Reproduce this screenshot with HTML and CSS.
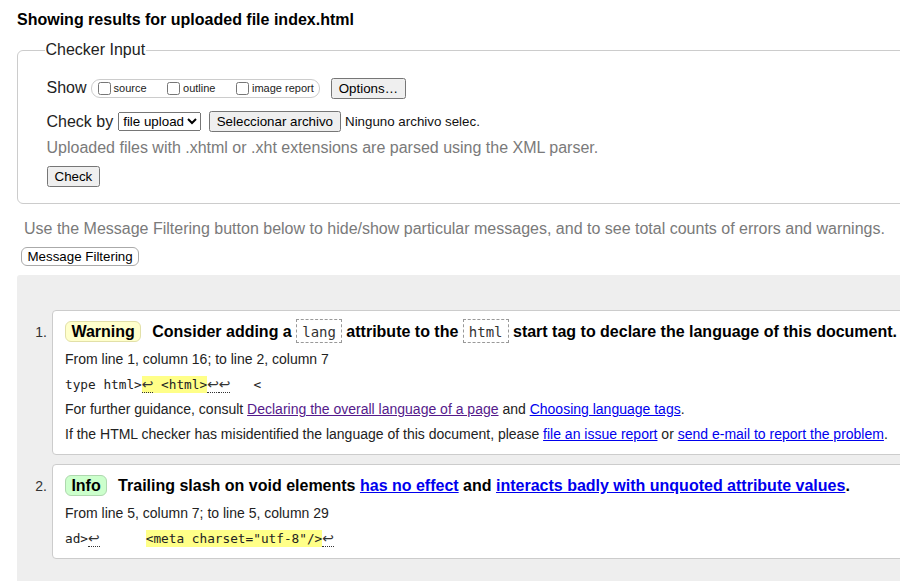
FILE: index.html
```html
<!DOCTYPE html>
<html lang="en">
<head>
<meta charset="utf-8">
<title>Showing results for uploaded file index.html - Nu Html Checker</title>
<link rel="stylesheet" href="styles.css">
</head>
<body>
<div class="page">
  <h2 class="heading">Showing results for uploaded file index.html</h2>

  <fieldset class="checker">
    <legend class="checker-legend">Checker Input</legend>
    <div class="row row-show">
      <span class="row-label">Show</span>
      <span class="show-group">
        <label class="opt"><input type="checkbox" class="cb">source</label>
        <label class="opt"><input type="checkbox" class="cb">outline</label>
        <label class="opt opt-last"><input type="checkbox" class="cb">image report</label>
      </span>
      <button class="btn btn-options" type="button">Options…</button>
    </div>
    <div class="row row-checkby">
      <span class="row-label">Check by</span>
      <select class="select"><option>file upload</option></select>
      <button class="btn btn-file" type="button">Seleccionar archivo</button>
      <span class="file-status">Ninguno archivo selec.</span>
    </div>
    <p class="note">Uploaded files with .xhtml or .xht extensions are parsed using the XML parser.</p>
    <div class="row row-submit">
      <button class="btn" type="button">Check</button>
    </div>
  </fieldset>

  <p class="filter-note">Use the Message Filtering button below to hide/show particular messages, and to see total counts of errors and warnings.</p>
  <button class="btn-filter" type="button">Message Filtering</button>

  <div class="results">
    <ol class="messages">
      <li class="msg">
        <span class="msg-num">1.</span>
        <div class="msg-box">
          <p class="msg-title"><strong class="badge badge-warning">Warning</strong>Consider adding a <code class="attr">lang</code> attribute to the <code class="attr">html</code> start tag to declare the language of this document.</p>
          <p class="msg-detail">From line 1, column 16; to line 2, column 7</p>
          <p class="msg-code"><code>type html&gt;<span class="hl"><b class="lf">↩</b> &lt;html&gt;</span><b class="lf">↩</b><b class="lf">↩</b>   &lt;</code></p>
          <p class="msg-detail">For further guidance, consult <a class="visited" href="#lang">Declaring the overall language of a page</a> and <a href="#tags">Choosing language tags</a>.</p>
          <p class="msg-detail">If the HTML checker has misidentified the language of this document, please <a href="#issue">file an issue report</a> or <a href="#mail">send e-mail to report the problem</a>.</p>
        </div>
      </li>
      <li class="msg">
        <span class="msg-num">2.</span>
        <div class="msg-box">
          <p class="msg-title"><strong class="badge badge-info">Info</strong>Trailing slash on void elements <a href="#effect">has no effect</a> and <a href="#unquoted">interacts badly with unquoted attribute values</a>.</p>
          <p class="msg-detail">From line 5, column 7; to line 5, column 29</p>
          <p class="msg-code"><code>ad&gt;<b class="lf">↩</b>      <span class="hl">&lt;meta charset="utf-8"/&gt;</span><b class="lf">↩</b></code></p>
        </div>
      </li>
    </ol>
  </div>
</div>
</body>
</html>
```

FILE: styles.css
```css
html {
  overflow: hidden;
  background: #fff;
}

body {
  margin: 0;
  font-family: "Liberation Sans", Arial, sans-serif;
  color: #222;
}

.page {
  width: 1100px;
  padding-left: 17px;
}

.heading {
  margin: 10px 0 0;
  font-size: 16px;
  line-height: 19px;
  font-weight: bold;
  color: #000;
}

/* Checker input fieldset */
.checker {
  margin: 12px 0 0;
  padding: 18px 0 16px 28.5px;
  border: 1px solid #ccc;
  border-radius: 6px;
  min-width: 0;
}

.checker-legend {
  margin-left: -2px;
  padding: 0 1px;
  font-size: 16px;
  color: #222;
}

.row {
  display: flex;
  align-items: center;
}

.row-label {
  font-size: 16px;
  color: #222;
}

.row-show {
  height: 22px;
}

.show-group {
  display: inline-flex;
  align-items: center;
  box-sizing: border-box;
  height: 19px;
  margin-left: 4px;
  padding: 0 5px 0 2px;
  border: 1px solid #ccc;
  border-radius: 9px;
}

.opt {
  display: inline-flex;
  align-items: center;
  font-size: 11px;
  color: #222;
  margin-right: 16.5px;
}

.opt-last {
  margin-right: 0;
}

.cb {
  margin: 0 3px 0 4px;
  width: 13px;
  height: 13px;
}

.btn {
  font: 13.333px "Liberation Sans", Arial, sans-serif;
}

.btn-options {
  margin-left: 11px;
}

.row-checkby {
  height: 23px;
  margin-top: 11px;
}

.select {
  margin-left: 5px;
  font: 13.333px "Liberation Sans", Arial, sans-serif;
}

.btn-file {
  margin-left: 7.5px;
}

.file-status {
  margin-left: 4px;
  font-size: 13.333px;
  color: #111;
}

.note {
  margin: 6px 0 0;
  font-size: 16px;
  line-height: 18.4px;
  color: #7a7a7a;
}

.row-submit {
  margin-top: 8.5px;
}

/* Filtering */
.filter-note {
  margin: 16.5px 0 0;
  padding-left: 7px;
  font-size: 16px;
  line-height: 18.4px;
  color: #7a7a7a;
}

.btn-filter {
  display: block;
  margin: 8px 0 0 4px;
  padding: 1px 5.5px;
  font: 13.333px/15px "Liberation Sans", Arial, sans-serif;
  color: #000;
  background: #fff;
  border: 1px solid #aaa;
  border-radius: 6px;
}

/* Results */
.results {
  margin-top: 9px;
  padding: 35px 0 40px;
  background: #eee;
  border-radius: 3px 0 0 0;
}

.messages {
  list-style: none;
  margin: 0;
  padding: 0;
}

.msg {
  display: flex;
  align-items: baseline;
  margin-bottom: 9px;
}

.msg-num {
  flex: none;
  width: 30px;
  padding-right: 5px;
  box-sizing: content-box;
  text-align: right;
  font-size: 14px;
  color: #333;
}

.msg-box {
  flex: 1;
  background: #fff;
  border: 1px solid #ccc;
  border-radius: 4px;
  padding: 10px 12px 7px;
}

.msg-title {
  margin: 0 0 5px;
  font-size: 16px;
  line-height: 21px;
  font-weight: bold;
  color: #000;
}

.badge {
  display: inline-block;
  padding: 0 5.4px;
  line-height: 19px;
  border: 1px solid;
  border-radius: 6px;
  margin-right: 11px;
}

.badge-warning {
  background: #ffc;
  border-color: #e2e0a8;
}

.badge-info {
  background: #cfc;
  border-color: #aed8ae;
}

.attr {
  font-family: "DejaVu Sans Mono", monospace;
  font-size: 14px;
  font-weight: normal;
  line-height: 1;
  color: #333;
  border: 1px dashed #999;
  padding: 4px 5px 2px;
}

.msg-detail {
  margin: 0;
  font-size: 14px;
  line-height: 25px;
  color: #222;
}

.msg-code {
  margin: 0;
  font-family: "DejaVu Sans Mono", monospace;
  font-size: 12.75px;
  line-height: 25px;
  white-space: pre;
  color: #222;
}

.msg-code code {
  font-family: inherit;
  font-size: inherit;
}

.hl {
  background: #ff8;
  padding: 1px 0;
}

.lf {
  font-family: "DejaVu Sans", sans-serif;
  font-weight: normal;
  font-size: 13.9px;
  line-height: 1;
  color: #333;
  border-bottom: 1px dotted #333;
}

.msg a {
  color: #00e;
}

.msg a.visited {
  color: #551a8b;
}
```
